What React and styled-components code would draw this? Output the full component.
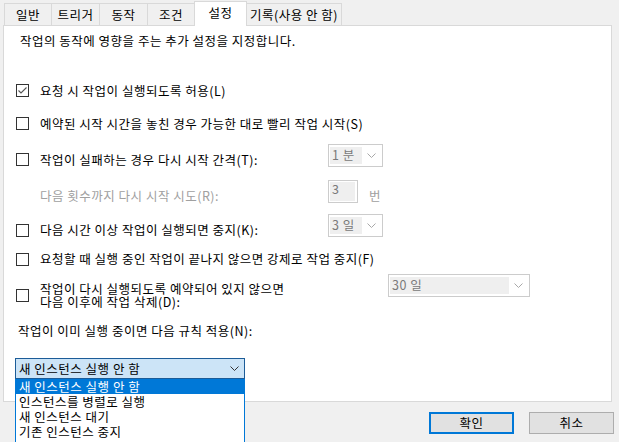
import React from 'react';
import styled, { createGlobalStyle } from 'styled-components';

const GlobalStyle = createGlobalStyle`
  html, body {
    margin: 0;
    padding: 0;
    background: #f0f0f0;
    overflow: hidden;
  }
  body {
    font-family: "Noto Sans CJK KR", "Noto Sans", sans-serif;
    font-size: 12.5px;
    letter-spacing: 0.5px;
    color: #000;
  }
`;

const tabs = [
  { label: '일반', w: 48 },
  { label: '트리거', w: 49 },
  { label: '동작', w: 49 },
  { label: '조건', w: 48 },
  { label: '설정', w: 53, active: true },
  { label: '기록(사용 안 함)', w: 96 },
];

const options = ['새 인스턴스 실행 안 함', '인스턴스를 병렬로 실행', '새 인스턴스 대기', '기존 인스턴스 중지'];

const Chevron = ({ dark }) => (
  <svg width="9" height="5" viewBox="0 0 9 5">
    <path d="M0.5 0.5 L4.5 4.5 L8.5 0.5" fill="none" stroke={dark ? '#333' : '#a8a8a8'} strokeWidth="1" />
  </svg>
);

const CheckBox = ({ checked }) => (
  <Box>
    {checked && (
      <svg width="11" height="11" viewBox="0 0 11 11">
        <polyline points="1.5,5.5 4,8 9.5,2.5" fill="none" stroke="#555" strokeWidth="1.1" />
      </svg>
    )}
  </Box>
);

const App = () => {
  return (
    <Page>
      <GlobalStyle />
      <TabBar>
        {tabs.map((t) => (
          <Tab key={t.label} w={t.w} active={t.active}>{t.label}</Tab>
        ))}
      </TabBar>
      <Panel>
        <Desc>작업의 동작에 영향을 주는 추가 설정을 지정합니다.</Desc>

        <Row h={33}>
          <CheckBox checked />
          <Label>요청 시 작업이 실행되도록 허용(L)</Label>
        </Row>
        <Row h={33}>
          <CheckBox />
          <Label>예약된 시작 시간을 놓친 경우 가능한 대로 빨리 작업 시작(S)</Label>
        </Row>
        <Row h={39}>
          <CheckBox />
          <Label w={288}>작업이 실패하는 경우 다시 시작 간격(T):</Label>
          <Combo w={55} lift={8}>
            <Fill w={32}>1 분</Fill>
            <Chevron />
          </Combo>
        </Row>
        <Row h={34}>
          <Indent />
          <Label w={288} disabled>다음 횟수까지 다시 시작 시도(R):</Label>
          <NumInput lift={9}>
            <Fill w={25}>3</Fill>
          </NumInput>
          <Unit>번</Unit>
        </Row>
        <Row h={34}>
          <CheckBox />
          <Label w={288}>다음 시간 이상 작업이 실행되면 중지(K):</Label>
          <Combo w={55} lift={9}>
            <Fill w={32}>3 일</Fill>
            <Chevron />
          </Combo>
        </Row>
        <Row h={24}>
          <CheckBox />
          <Label>요청할 때 실행 중인 작업이 끝나지 않으면 강제로 작업 중지(F)</Label>
        </Row>
        <Row h={48}>
          <CheckBox />
          <Label w={348} tight>
            작업이 다시 실행되도록 예약되어 있지 않으면<br />다음 이후에 작업 삭제(D):
          </Label>
          <Combo w={142} lift={19}>
            <Fill w={119}>30 일</Fill>
            <Chevron />
          </Combo>
        </Row>
        <Row h={24} pad={14}>
          <Label>작업이 이미 실행 중이면 다음 규칙 적용(N):</Label>
        </Row>

        <Select>
          <SelectValue>
            <span>새 인스턴스 실행 안 함</span>
            <Chevron dark />
          </SelectValue>
          <List>
            {options.map((o, i) => (
              <Item key={o} selected={i === 0}>{o}</Item>
            ))}
          </List>
        </Select>
      </Panel>
      <Footer>
        <Button primary>확인</Button>
        <Button>취소</Button>
      </Footer>
    </Page>
  );
};

export default App;

const Page = styled.div`
  width: 619px;
  height: 442px;
  padding-left: 3px;
  box-sizing: border-box;
  position: relative;
`;

const TabBar = styled.div`
  display: flex;
  align-items: flex-end;
  height: 25px;
  padding-left: 1px;
`;

const Tab = styled.div`
  width: ${(p) => p.w}px;
  height: ${(p) => (p.active ? 25 : 22)}px;
  box-sizing: border-box;
  border: 1px solid #d9d9d9;
  border-bottom: 0;
  margin-right: -1px;
  margin-bottom: ${(p) => (p.active ? -1 : 0)}px;
  background: ${(p) => (p.active ? '#ffffff' : '#f0f0f0')};
  position: relative;
  z-index: ${(p) => (p.active ? 4 : 1)};
  display: flex;
  align-items: center;
  justify-content: center;
  padding-bottom: ${(p) => (p.active ? 3 : 0)}px;
  line-height: 16px;
  white-space: nowrap;
`;

const Panel = styled.div`
  width: 609px;
  height: 377px;
  box-sizing: border-box;
  background: #fff;
  border: 1px solid #d9d9d9;
  padding-top: 7px;
  display: flex;
  flex-direction: column;
  position: relative;
  z-index: 3;
`;

const Desc = styled.div`
  line-height: 16px;
  padding-left: 16px;
  margin-bottom: 25px;
`;

const Row = styled.div`
  display: flex;
  align-items: center;
  height: ${(p) => p.h}px;
  padding-left: ${(p) => p.pad ?? 12}px;
  flex-shrink: 0;
`;

const Box = styled.div`
  width: 13px;
  height: 13px;
  box-sizing: border-box;
  border: 1px solid #333;
  background: #fff;
  margin-right: 11px;
  flex-shrink: 0;
  display: flex;
  align-items: center;
  justify-content: center;
`;

const Indent = styled.div`
  width: 24px;
  flex-shrink: 0;
`;

const Label = styled.div`
  width: ${(p) => (p.w ? `${p.w}px` : 'auto')};
  flex-shrink: 0;
  line-height: ${(p) => (p.tight ? 13 : 16)}px;
  color: ${(p) => (p.disabled ? '#a0a0a0' : '#000')};
  white-space: nowrap;
`;

const Combo = styled.div`
  width: ${(p) => p.w}px;
  height: 23px;
  box-sizing: border-box;
  border: 1px solid #cccccc;
  background: #fff;
  padding: 2px 6px 2px 1px;
  margin-bottom: ${(p) => p.lift}px;
  display: flex;
  align-items: center;
  justify-content: space-between;
  flex-shrink: 0;
`;

const Fill = styled.div`
  width: ${(p) => p.w}px;
  height: 17px;
  background: #efefef;
  color: #7a7a7a;
  line-height: 16px;
  padding-left: 2px;
  box-sizing: border-box;
  white-space: nowrap;
`;

const NumInput = styled.div`
  width: 30px;
  height: 23px;
  box-sizing: border-box;
  border: 1px solid #cccccc;
  padding: 1px;
  margin-bottom: ${(p) => p.lift}px;
  flex-shrink: 0;
  & > div {
    height: 19px;
    line-height: 14px;
  }
`;

const Unit = styled.div`
  margin-left: 11px;
  color: #a0a0a0;
  line-height: 16px;
`;

const Select = styled.div`
  position: relative;
  margin: 15px 0 0 11px;
  width: 230px;
`;

const SelectValue = styled.div`
  height: 21px;
  box-sizing: border-box;
  border: 1px solid #1c5c98;
  background: #cce4f7;
  display: flex;
  align-items: center;
  justify-content: space-between;
  padding: 0 5px 0 3px;
  line-height: 16px;
`;

const List = styled.div`
  position: absolute;
  top: 21px;
  left: 0;
  width: 230px;
  box-sizing: border-box;
  border: 1px solid #0078d7;
  border-top: 0;
  background: #fff;
  z-index: 10;
  padding-bottom: 4px;
`;

const Item = styled.div`
  height: 15px;
  line-height: 15px;
  padding-left: 3px;
  background: ${(p) => (p.selected ? '#0078d7' : '#fff')};
  color: ${(p) => (p.selected ? '#fff' : '#000')};
  white-space: nowrap;
`;

const Footer = styled.div`
  display: flex;
  justify-content: flex-end;
  gap: 15px;
  padding-right: 5px;
  margin-top: 10px;
`;

const Button = styled.div`
  width: 85px;
  height: 22px;
  box-sizing: border-box;
  background: #e1e1e1;
  border: ${(p) => (p.primary ? '2px solid #0078d7' : '1px solid #adadad')};
  display: flex;
  align-items: center;
  justify-content: center;
  line-height: 16px;
`;
